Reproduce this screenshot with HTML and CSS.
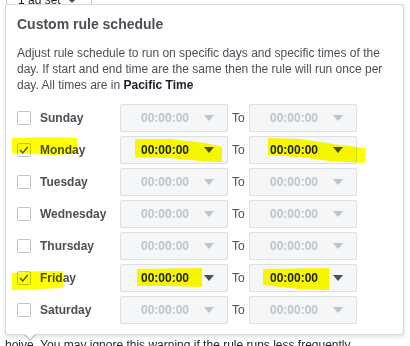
FILE: index.html
```html
<!DOCTYPE html>
<html lang="en">
<head>
  <meta charset="UTF-8">
  <meta name="viewport" content="width=device-width, initial-scale=1.0">
  <title>Custom rule schedule</title>
  <link rel="stylesheet" href="styles.css">
</head>
<body>
  <div class="page">
    <div class="adset-btn">1 ad set <span class="caret"></span></div>
    <p class="warning">hoive. You may ignore this warning if the rule runs less frequently.</p>
  </div>

  <div class="popover">
    <h2 class="title">Custom rule schedule</h2>
    <p class="intro">Adjust rule schedule to run on specific days and specific times of the day. If start and end time are the same then the rule will run once per day. All times are in <b>Pacific Time</b></p>

    <div class="days">
      <label class="day"><span class="check"></span>Sunday</label>
      <div class="time off"><span>00:00:00</span><i class="arrow"></i></div>
      <span class="to">To</span>
      <div class="time off"><span>00:00:00</span><i class="arrow"></i></div>

      <label class="day"><span class="check on"><svg viewBox="0 0 14 14"><polyline points="2.5,7 5.5,10.5 11.5,3.5"/></svg></span>Monday</label>
      <div class="time"><span>00:00:00</span><i class="arrow"></i></div>
      <span class="to">To</span>
      <div class="time"><span>00:00:00</span><i class="arrow"></i></div>

      <label class="day"><span class="check"></span>Tuesday</label>
      <div class="time off"><span>00:00:00</span><i class="arrow"></i></div>
      <span class="to">To</span>
      <div class="time off"><span>00:00:00</span><i class="arrow"></i></div>

      <label class="day"><span class="check"></span>Wednesday</label>
      <div class="time off"><span>00:00:00</span><i class="arrow"></i></div>
      <span class="to">To</span>
      <div class="time off"><span>00:00:00</span><i class="arrow"></i></div>

      <label class="day"><span class="check"></span>Thursday</label>
      <div class="time off"><span>00:00:00</span><i class="arrow"></i></div>
      <span class="to">To</span>
      <div class="time off"><span>00:00:00</span><i class="arrow"></i></div>

      <label class="day"><span class="check on"><svg viewBox="0 0 14 14"><polyline points="2.5,7 5.5,10.5 11.5,3.5"/></svg></span>Friday</label>
      <div class="time"><span>00:00:00</span><i class="arrow"></i></div>
      <span class="to">To</span>
      <div class="time"><span>00:00:00</span><i class="arrow"></i></div>

      <label class="day"><span class="check"></span>Saturday</label>
      <div class="time off"><span>00:00:00</span><i class="arrow"></i></div>
      <span class="to">To</span>
      <div class="time off"><span>00:00:00</span><i class="arrow"></i></div>
    </div>
  </div>

  <!-- highlighter marks drawn over the screenshot -->
  <svg class="marker" width="410" height="346" viewBox="0 0 410 346">
    <path d="M12 138 L50 137 L77 138 L77 153 L55 155 L12 153 Z"/>
    <path d="M135 139 L170 139 L205 143 L222 147 L222 162 L200 161 L170 158 L135 157 Z"/>
    <path d="M268 138 L300 139 L340 145 L365 148 L365 163 L330 161 L300 157 L268 155 Z"/>
    <path d="M12 273 L40 271 L63 271 L63 288 L40 289 L12 290 Z"/>
    <path d="M137 269 L202 268 L202 287 L170 286 L137 286 Z"/>
    <path d="M263 269 L329 268 L329 290 L300 289 L263 285 Z"/>
  </svg>
</body>
</html>
```

FILE: styles.css
```css
body {
  margin: 0;
  background: #fff;
  font-family: 'Liberation Sans', Arial, sans-serif;
  color: #4b4f56;
  font-size: 12px;
  overflow: hidden;
  position: relative;
  width: 410px;
  height: 346px;
}

.page {
  height: 346px;
  display: flex;
  flex-direction: column;
  justify-content: space-between;
}

.adset-btn {
  align-self: flex-start;
  height: 24px;
  box-sizing: border-box;
  margin: -12px 0 0 6px;
  padding: 0 14px 0 11px;
  border: 1px solid #ccd0d5;
  border-radius: 2px;
  line-height: 22px;
  color: #1d2129;
  display: flex;
  align-items: center;
  gap: 4px;
}

.caret {
  width: 0;
  height: 0;
  border-left: 5px solid transparent;
  border-right: 5px solid transparent;
  border-top: 5px solid #4b4f56;
  margin-left: 2px;
}

.warning {
  margin: 0 0 -7px 5px;
  line-height: 16px;
  color: #1d2129;
}

.popover {
  position: absolute;
  left: 5px;
  top: 4px;
  width: 399px;
  box-sizing: border-box;
  padding: 10px 11px 10px;
  background: #fff;
  border: 1px solid rgba(0, 0, 0, 0.15);
  border-radius: 3px;
  box-shadow: 0 2px 4px rgba(0, 0, 0, 0.12);
}

.popover::before,
.popover::after {
  content: '';
  position: absolute;
  left: 18px;
  width: 0;
  height: 0;
  border-left: 6px solid transparent;
  border-right: 6px solid transparent;
}

.popover::before {
  bottom: -7px;
  border-top: 6px solid rgba(0, 0, 0, 0.2);
}

.popover::after {
  bottom: -5px;
  border-top: 6px solid #fff;
}

.title {
  margin: 0;
  font-size: 14px;
  line-height: 18px;
  font-weight: bold;
  color: #4b4f56;
}

.intro {
  margin: 12px 0 11px;
  line-height: 16px;
}

.intro b {
  color: #1d2129;
}

.days {
  display: grid;
  grid-template-columns: 103px 108px 21px 108px;
  grid-auto-rows: 28px;
  row-gap: 4px;
  align-items: center;
}

.day {
  display: flex;
  align-items: center;
  gap: 9px;
  font-weight: bold;
  color: #4b4f56;
}

.check {
  width: 14px;
  height: 14px;
  box-sizing: border-box;
  border: 1px solid #bec3c9;
  border-radius: 2px;
  background: #fff;
  display: flex;
}

.check svg {
  width: 12px;
  height: 12px;
  fill: none;
  stroke: #4b4f56;
  stroke-width: 1.6;
}

.time {
  height: 28px;
  box-sizing: border-box;
  border: 1px solid #dddfe2;
  border-radius: 2px;
  background: #f5f6f7;
  display: flex;
  align-items: center;
  padding: 0 13px 0 20px;
  font-weight: bold;
  color: #1d2129;
}

.arrow {
  margin-left: auto;
  width: 0;
  height: 0;
  border-left: 5px solid transparent;
  border-right: 5px solid transparent;
  border-top: 6px solid #4b4f56;
}

.time.off {
  color: #bec3c9;
}

.time.off .arrow {
  border-top-color: #bec3c9;
}

.to {
  padding-left: 4px;
  color: #4b4f56;
}

.marker {
  position: absolute;
  left: 0;
  top: 0;
  pointer-events: none;
  mix-blend-mode: multiply;
}

.marker path {
  fill: #ffff00;
}
```
